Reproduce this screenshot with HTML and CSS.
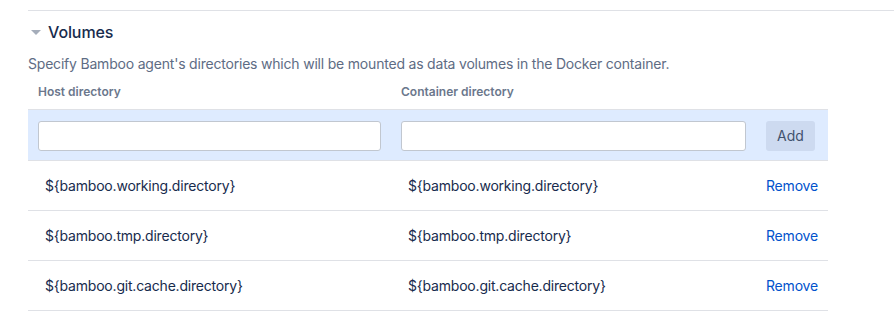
FILE: index.html
```html
<!DOCTYPE html>
<html lang="en">
<head>
  <meta charset="UTF-8">
  <title>Docker volumes</title>
  <link rel="stylesheet" href="styles.css">
</head>
<body>
  <div class="panel">
    <div class="heading">
      <span class="toggle"></span>
      <h2>Volumes</h2>
    </div>
    <p class="description">Specify Bamboo agent's directories which will be mounted as data volumes in the Docker container.</p>

    <table class="volumes">
      <colgroup>
        <col class="col-host">
        <col class="col-container">
        <col class="col-action">
      </colgroup>
      <thead>
        <tr>
          <th>Host directory</th>
          <th>Container directory</th>
          <th></th>
        </tr>
      </thead>
      <tbody>
        <tr class="add-row">
          <td><input type="text" class="text-field"></td>
          <td><input type="text" class="text-field"></td>
          <td><button class="btn">Add</button></td>
        </tr>
        <tr>
          <td class="value">${bamboo.working.directory}</td>
          <td class="value">${bamboo.working.directory}</td>
          <td><a href="#" class="remove">Remove</a></td>
        </tr>
        <tr>
          <td class="value">${bamboo.tmp.directory}</td>
          <td class="value">${bamboo.tmp.directory}</td>
          <td><a href="#" class="remove">Remove</a></td>
        </tr>
        <tr>
          <td class="value">${bamboo.git.cache.directory}</td>
          <td class="value">${bamboo.git.cache.directory}</td>
          <td><a href="#" class="remove">Remove</a></td>
        </tr>
      </tbody>
    </table>
  </div>
</body>
</html>
```

FILE: styles.css
```css
body {
  margin: 0;
  font-family: Inter, "Noto Sans", sans-serif;
  font-size: 14px;
  letter-spacing: -0.2px;
  color: #172b4d;
  background: #fff;
}
.panel {
  margin: 10px 0 0 28px;
  border-top: 1px solid #dfe1e6;
}
.heading {
  display: flex;
  align-items: center;
  margin-top: 9px;
  height: 24px;
}
.toggle {
  width: 0;
  height: 0;
  margin: 0 7px 0 3px;
  border-left: 5px solid transparent;
  border-right: 5px solid transparent;
  border-top: 5px solid #a5adba;
}
.heading h2 {
  margin: 0;
  font-size: 16px;
  font-weight: 500;
  line-height: 24px;
  letter-spacing: -0.1px;
  color: #172b4d;
}
.description {
  margin: 10px 0 0;
  line-height: 20px;
  color: #5e6c84;
}
.volumes {
  width: 800px;
  margin-top: 2px;
  border-collapse: collapse;
  table-layout: fixed;
}
.col-host {
  width: 363px;
}
.col-container {
  width: 365px;
}
.col-action {
  width: 72px;
}
.volumes th {
  padding: 6px 10px 7px;
  line-height: 20px;
  font-size: 12px;
  font-weight: 600;
  letter-spacing: 0;
  color: #6b778c;
  text-align: left;
  border-bottom: 1px solid #dfe1e6;
}
.volumes td {
  padding: 0 10px;
  height: 49px;
  border-bottom: 1px solid #dfe1e6;
  line-height: 20px;
}
.add-row td {
  background-color: #deebff;
  padding: 11px 10px 9px;
  height: 30px;
}
.text-field {
  display: block;
  width: 100%;
  height: 30px;
  box-sizing: border-box;
  border: 1px solid #c1c7d0;
  border-radius: 3px;
  background: #fff;
  font: inherit;
}
.btn {
  display: block;
  height: 30px;
  padding: 0 11px;
  border: none;
  border-radius: 3px;
  background-color: rgba(9, 30, 66, 0.08);
  color: #42526e;
  font: inherit;
  cursor: pointer;
}
.volumes td.value {
  padding-left: 17px;
}
.remove {
  color: #0052cc;
  text-decoration: none;
}
```
